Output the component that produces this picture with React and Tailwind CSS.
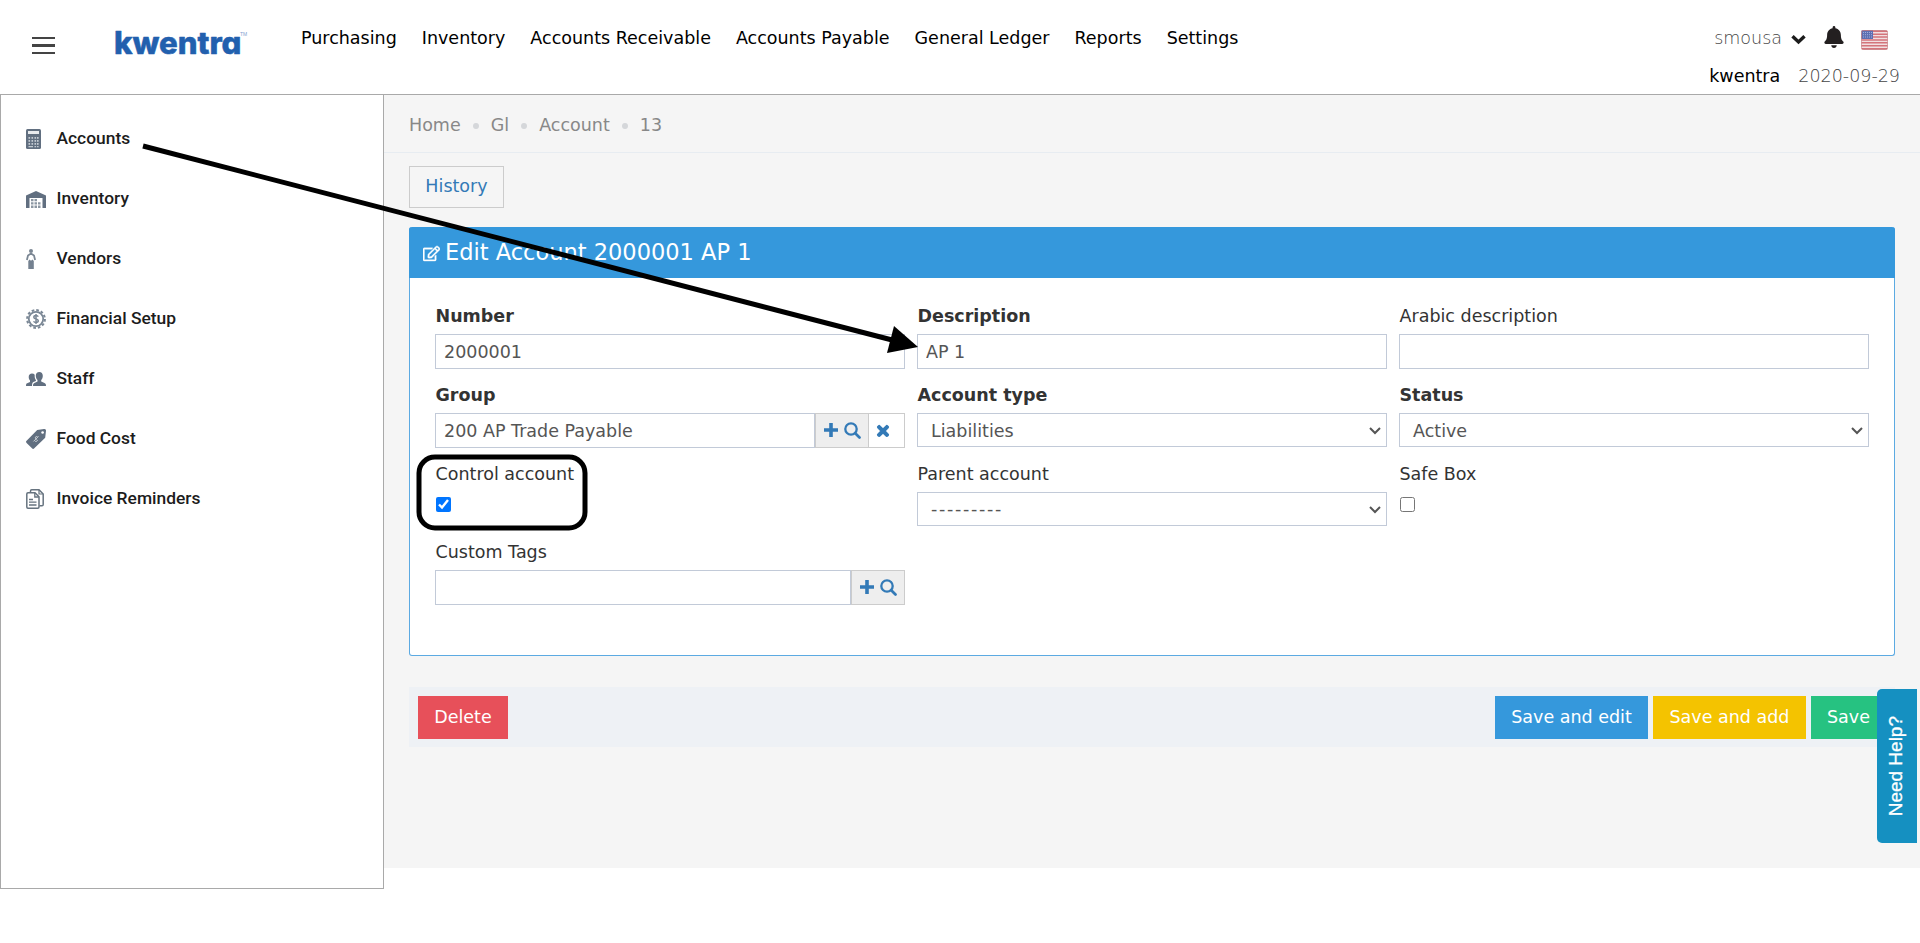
import { FaBell, FaRegEdit, FaTimes } from 'react-icons/fa'

const NAV_LINKS = [
  'Purchasing',
  'Inventory',
  'Accounts Receivable',
  'Accounts Payable',
  'General Ledger',
  'Reports',
  'Settings',
]

const BREADCRUMBS = ['Home', 'Gl', 'Account', '13']

function CalculatorIcon() {
  return (
    <svg width="15" height="20" viewBox="0 0 15 20">
      <rect width="15" height="20" rx="1.5" fill="#616f80" />
      <rect x="2" y="2" width="11" height="3" fill="#e8ebee" />
      {[8, 11, 14].map((y) =>
        [2.5, 5.5, 8.5, 11].map((x) => <rect key={`${x}-${y}`} x={x} y={y} width="1.6" height="1.8" fill="#c3cad1" />)
      )}
      <path d="M2.500 17h4.500v1.300H2.500zM8.500 17h1.600v1.300H8.500zM11 17h1.600v1.300H11z" fill="#c3cad1" />
    </svg>
  )
}

function WarehouseIcon() {
  return (
    <svg width="20" height="17" viewBox="0 0 20 17">
      <path d="M0 17V4.500L10 0l10 4.500V17h-3.500V7h-13v10z" fill="#616f80" />
      <path d="M5 8h2.500v2.300H5zM8.500 8H11v2.300H8.500zM5 11.300h2.500v2.300H5zM8.500 11.300H11v2.300H8.500zM12 11.300h2.500v2.300H12zM5 14.600h2.500V17H5zM8.500 14.600H11V17H8.500zM12 14.600h2.500V17H12z" fill="#8b96a2" />
    </svg>
  )
}

function VendorIcon() {
  return (
    <svg width="10" height="20" viewBox="0 0 10 20">
      <circle cx="5" cy="2" r="2" fill="#7a8693" />
      <path d="M5 4.500 2 6.500.9 11M5 4.500l3 2L9.100 11" fill="none" stroke="#7a8693" strokeWidth="1.800" />
      <path d="M3.500 10.500 5 11.800l1.500-1.300 1.300 1.500v8H2.300v-8z" fill="#748190" />
    </svg>
  )
}

function CoinIcon() {
  return (
    <svg width="20" height="20" viewBox="0 0 20 20">
      <circle cx="10" cy="10" r="8.900" fill="none" stroke="#7a8795" strokeWidth="2" strokeDasharray="2.660 2" />
      <circle cx="10" cy="10" r="7.200" fill="none" stroke="#7a8795" strokeWidth="1.800" />
      <path d="M12.300 7.700c-.5-.9-1.300-1.200-2.300-1.200-1.300 0-2.200.7-2.200 1.700 0 2.300 4.500 1.300 4.500 3.600 0 1.100-1 1.700-2.300 1.700-1.100 0-2-.4-2.400-1.300M10 5v10" fill="none" stroke="#7a8795" strokeWidth="1.500" />
    </svg>
  )
}

function StaffIcon() {
  return (
    <svg width="20" height="14" viewBox="0 0 20 14" fill="#616f80">
      <path d="M13.300 0c2.200 0 3.500 1.500 3.500 3.700 0 1.900-.6 3.400-1.600 4.400v1.500l3.300 1.400c1 .4 1.500 1.200 1.500 3H7c0-1.800.4-2.600 1.400-3l3.100-1.400V8.100c-1-1-1.700-2.500-1.700-4.400C9.800 1.500 11.100 0 13.300 0z" />
      <path d="M6 1.500c1.200 0 2.100.4 2.700 1.200-.2 2 .2 3.900 1.200 5.400v.8l-2.500 1.200C6.400 10.600 6 11.800 6 14H0c0-1.700.3-2.500 1.200-2.800L4 10V8.600C3.200 7.700 2.700 6.500 2.700 5c0-2.100 1.300-3.500 3.300-3.500z" />
    </svg>
  )
}

function PriceTagIcon() {
  return (
    <svg width="20" height="20" viewBox="0 0 20 20">
      <path d="M11.200 1 18 0c1.400-.1 2 .6 2 1.800l-.8 7L8.300 19.300c-.8.8-1.600.8-2.300 0L.6 14c-.8-.8-.8-1.500 0-2.300z" fill="#616f80" />
      <circle cx="16.600" cy="3.500" r="1.300" fill="#fff" />
      <path d="M11.700 8c-1-1-2.700-.3-2.400 1 .2 1.100 1.700.9 2 2 .3 1.400-1.400 2-2.500 1M12.500 7.400l-5 5" fill="none" stroke="#c9cfd5" strokeWidth="1" />
    </svg>
  )
}

function InvoiceIcon() {
  return (
    <svg width="18" height="20" viewBox="0 0 18 20" fill="none" stroke="#66737f" strokeWidth="1.500">
      <path d="M4.500 3.500V2q0-1.200 1.200-1.200H13L17.200 5v10.500q0 1.300-1.200 1.300h-2.500" />
      <path d="M13 1v4h4" strokeWidth="1.200" />
      <path d="M.8 5q0-1.200 1.200-1.200h7l4 4V18q0 1.200-1.200 1.200H2Q.8 19.200.8 18z" fill="#fff" />
      <path d="M8.800 4v4h4M3 10.500h4M3 13.200h7.500M3 16h7.500" strokeWidth="1.300" />
    </svg>
  )
}

const SIDEBAR_ITEMS = [
  { label: 'Accounts', icon: CalculatorIcon },
  { label: 'Inventory', icon: WarehouseIcon },
  { label: 'Vendors', icon: VendorIcon },
  { label: 'Financial Setup', icon: CoinIcon },
  { label: 'Staff', icon: StaffIcon },
  { label: 'Food Cost', icon: PriceTagIcon },
  { label: 'Invoice Reminders', icon: InvoiceIcon },
]

function UsFlag() {
  return (
    <svg width="27" height="20" viewBox="0 0 27 20">
      <rect x=".5" y=".5" width="26" height="19" rx="2" fill="#f1dfe1" />
      {[0.5, 3.4, 6.3, 9.2, 12.1, 15, 17.9].map((y) => (
        <rect key={y} x=".5" y={y} width="26" height="1.500" rx=".5" fill="#d4747b" />
      ))}
      <rect x=".5" y=".5" width="11.500" height="8.500" fill="#5e6fb2" />
      <path d="M2 2.500h9M2 4.700h9M2 7h9" stroke="#a3aeda" strokeDasharray="1 1" />
      <rect x=".5" y=".5" width="26" height="19" rx="2" fill="none" stroke="#b9686e" strokeOpacity=".55" />
    </svg>
  )
}

function Header() {
  return (
    <header className="flex h-[95px] items-start border-b border-[#a9a9a9] bg-white">
      <button type="button" aria-label="Menu" className="mt-[37px] ml-8 flex h-[17px] w-[23px] flex-col justify-between">
        <span className="h-0.5 w-full bg-[#444]" />
        <span className="h-[3px] w-full bg-[#444]" />
        <span className="h-0.5 w-full bg-[#444]" />
      </button>
      <svg className="mt-[20px] ml-[55px] font-['Inter'] font-extrabold [font-feature-settings:'cv11']" width="144" height="46" viewBox="0 0 144 46">
        <text x="4" y="33.800" textLength="127.500" lengthAdjust="spacingAndGlyphs" fill="#2260ae" stroke="#2260ae" strokeWidth=".5" strokeLinejoin="round" fontSize="31">
          kwentra
        </text>
        <text x="130" y="16" fill="#7fa3d1" fontFamily="Liberation Sans" fontWeight="400" fontSize="5">TM</text>
      </svg>
      <nav className="mt-[26px] ml-[47px] flex gap-[25px] leading-6 text-black">
        {NAV_LINKS.map((link) => (
          <a key={link} href="#">{link}</a>
        ))}
      </nav>
      <div className="mr-5 ml-auto">
        <div className="mt-[26px] flex h-6 items-center justify-end pr-3">
          <span className="font-extralight text-[#444]">smousa</span>
          <svg className="mt-0.5 ml-[9px]" width="15" height="11" viewBox="0 0 15 11" fill="none" stroke="#1c1c1c" strokeWidth="3.400">
            <path d="m1.500 2.200 6 5.800 6-5.800" />
          </svg>
          <FaBell className="mb-[3px] ml-[18px] h-[22px] w-5 text-[#231f20]" />
          <span className="mt-[3px] ml-[17px]"><UsFlag /></span>
        </div>
        <div className="mt-3.5 flex justify-end gap-[18px] leading-6">
          <span className="text-black">kwentra</span>
          <span className="font-extralight text-[#444]">2020-09-29</span>
        </div>
      </div>
    </header>
  )
}

function Sidebar() {
  return (
    <aside className="h-[794px] w-96 shrink-0 border-x border-b border-[#a9a9a9] bg-white pt-[13px] pl-[25px]">
      {SIDEBAR_ITEMS.map((item) => (
        <a key={item.label} href="#" className="flex h-[60px] items-center font-['Roboto'] text-[17.4px] font-medium text-[#1c1c1c]">
          <span className="mt-0.5 w-[30.5px]"><item.icon /></span>
          {item.label}
        </a>
      ))}
    </aside>
  )
}

function Field({ label, required, children }) {
  return (
    <div className="flex flex-col items-start">
      <label className={required ? 'mb-1.5 h-[25px] pt-px pl-[0.5px] leading-6 font-bold' : 'mb-1.5 h-[25px] pt-px pl-[0.5px] leading-6'}>{label}</label>
      {children}
    </div>
  )
}

function TextInput({ value }) {
  return <input readOnly value={value} className="h-[35px] w-full min-w-0 border border-[#c2cad8] bg-white px-2 text-[#555] outline-none" />
}

function SelectBox({ value, wide }) {
  return (
    <div className="flex h-[34px] w-full items-center justify-between border border-[#c2cad8] bg-white pr-[5px] pl-[13px] text-[#555]">
      <span className={wide ? 'tracking-[1.700px]' : 'pt-0.5'}>{value}</span>
      <svg className="mt-0.5" width="12" height="8" viewBox="0 0 12 8" fill="none" stroke="#555" strokeWidth="2">
        <path d="m1 1 5 5 5-5" />
      </svg>
    </div>
  )
}

function LookupButtons() {
  return (
    <span className="flex h-[35px] w-[54px] shrink-0 items-center justify-center gap-1.5 border border-[#ccc] bg-[#eee] text-[#337ab7]">
      <svg className="mb-0.5" width="14" height="14" viewBox="0 0 14 14" fill="none" stroke="currentColor" strokeWidth="3.600">
        <path d="M7 0v14M0 7h14" />
      </svg>
      <svg width="17" height="17" viewBox="0 0 17 17" fill="none" stroke="currentColor" strokeWidth="2.300">
        <circle cx="7" cy="7" r="5.700" />
        <path d="m11.200 11.200 4.300 4.300" strokeWidth="2.700" strokeLinecap="round" />
      </svg>
    </span>
  )
}

function AccountForm() {
  return (
    <section className="h-[429px] rounded-[3px] border border-t-0 border-[#5caae2] bg-white">
      <h2 className="-mx-px flex h-[51px] items-center rounded-t-[3px] bg-[#3598dc] pl-3.5 text-[22.5px] text-white">
        <FaRegEdit className="mt-px mr-[5px] size-[17px] stroke-current stroke-[12]" />
        Edit Account 2000001 AP 1
      </h2>
      <form className="grid grid-cols-3 gap-x-3 px-[25px] pt-[25px] text-[#333]">
        <div className="h-[79px]">
          <Field label="Number" required><TextInput value="2000001" /></Field>
        </div>
        <div className="h-[79px]">
          <Field label="Description" required><TextInput value="AP 1" /></Field>
        </div>
        <div className="h-[79px]">
          <Field label="Arabic description"><TextInput value="" /></Field>
        </div>
        <div className="h-[79px]">
          <Field label="Group" required>
            <div className="flex w-full">
              <TextInput value="200 AP Trade Payable" />
              <LookupButtons />
              <span className="flex h-[35px] w-9 shrink-0 items-center border border-l-0 border-[#ccc] bg-white pl-1.5 text-[#337ab7]">
                <FaTimes className="size-4 stroke-current stroke-[35]" />
              </span>
            </div>
          </Field>
        </div>
        <div className="h-[79px]">
          <Field label="Account type" required><SelectBox value="Liabilities" /></Field>
        </div>
        <div className="h-[79px]">
          <Field label="Status" required><SelectBox value="Active" /></Field>
        </div>
        <div className="h-[78px]">
          <Field label="Control account">
            <input type="checkbox" defaultChecked className="mt-[5px] ml-px size-[15px] accent-[#0075ff]" />
          </Field>
        </div>
        <div className="h-[78px]">
          <Field label="Parent account"><SelectBox value="---------" wide /></Field>
        </div>
        <div className="h-[78px]">
          <Field label="Safe Box">
            <input type="checkbox" className="mt-[5px] ml-px size-[15px]" />
          </Field>
        </div>
        <Field label="Custom Tags">
          <div className="flex w-full">
            <TextInput value="" />
            <LookupButtons />
          </div>
        </Field>
      </form>
    </section>
  )
}

function Annotations() {
  return (
    <svg className="pointer-events-none absolute top-0 left-0" width="1000" height="600" viewBox="0 0 1000 600">
      <path d="M143 146 896 341" stroke="#000" strokeWidth="5" />
      <path d="m918 347-24-21-7 27z" fill="#000" />
      <rect x="419" y="457" width="166" height="71" rx="16" fill="none" stroke="#000" strokeWidth="5" />
    </svg>
  )
}

export default function App() {
  return (
    <div className="relative h-[943px] w-[1920px] overflow-hidden bg-white font-['DejaVu_Sans',sans-serif] text-[17.5px]">
      <Header />
      <div className="flex items-start">
        <Sidebar />
        <main className="h-[773px] flex-1 bg-[#f5f5f5]">
          <div className="flex h-[58px] items-center gap-3 border-b border-[#e7ecf1] pt-1 pl-[25px] text-[#888]">
            {BREADCRUMBS.map((crumb, i) => (
              <div key={crumb} className="flex items-center gap-3">
                {i > 0 && <span className="size-1.5 rounded-full bg-[#d5d7da]" />}
                <span>{crumb}</span>
              </div>
            ))}
          </div>
          <div className="pt-[13px] pr-[25px] pl-[25px]">
            <a href="#" className="flex h-[42px] w-[95px] items-center justify-center border border-[#ccc] pb-0.5 text-[#337ab7]">History</a>
            <div className="mt-[19px]">
              <AccountForm />
            </div>
            <div className="mt-[31px] flex h-[60px] items-center gap-[5px] bg-[#eef1f5] px-[9px] text-white">
              <button type="button" className="mr-auto h-[43px] w-[90px] bg-[#e7505a]">Delete</button>
              <button type="button" className="h-[43px] w-[153px] bg-[#3598dc]">Save and edit</button>
              <button type="button" className="h-[43px] w-[153px] bg-[#f4c300]">Save and add</button>
              <button type="button" className="h-[43px] w-[75px] bg-[#26c281]">Save</button>
            </div>
          </div>
        </main>
      </div>
      <button type="button" className="absolute top-[689px] right-[3px] flex h-[154px] w-10 items-center justify-center rounded-l-[5px] bg-[#1590c1] text-white">
        <span className="mr-px rotate-180 font-['Liberation_Sans'] text-[19px] [-webkit-text-stroke:0.3px_white] [writing-mode:vertical-rl]">Need Help?</span>
      </button>
      <Annotations />
    </div>
  )
}
